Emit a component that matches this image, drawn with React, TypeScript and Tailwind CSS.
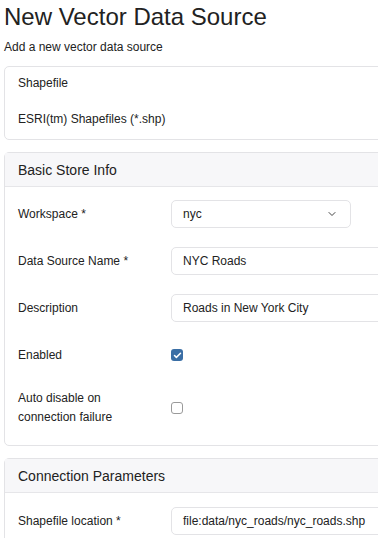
import { ChevronDown, Check } from "lucide-react";

const font = { fontFamily: '"Liberation Sans", Arial, sans-serif' };

const Card = ({ title, children }: { title?: string; children: React.ReactNode }) => (
  <div className="rounded-[5px] border border-[#e3e3e6] bg-white">
    {title && (
      <div className="flex h-[34px] items-center border-b border-[#e6e6e9] bg-[#f7f7f9] px-[13px] pt-[2px] text-[14px] text-[#222]">
        {title}
      </div>
    )}
    {children}
  </div>
);

const Row = ({ label, children, tall }: { label: React.ReactNode; children?: React.ReactNode; tall?: boolean }) => (
  <div className={`flex items-center ${tall ? "h-[40px]" : "h-[28px]"}`}>
    <div className={`pl-[13px] text-[12px] leading-[19px] text-[#222] ${children ? "w-[166px] shrink-0" : "whitespace-nowrap"}`}>
      {label}
    </div>
    {children}
  </div>
);

const TextBox = ({ value }: { value: string }) => (
  <div className="flex h-[28px] w-[240px] items-center rounded-[5px] border border-[#e3e3e6] px-[11px] text-[12px] text-[#222]">
    {value}
  </div>
);

const Box = ({ checked }: { checked?: boolean }) =>
  checked ? (
    <div className="flex h-[12px] w-[12px] items-center justify-center rounded-[3px] bg-[#3a6ea5]">
      <Check size={9} strokeWidth={4} color="white" />
    </div>
  ) : (
    <div className="h-[12px] w-[12px] rounded-[3px] border border-[#9a9a9a] bg-white" />
  );

export default function App() {
  return (
    <div className="h-[538px] w-[378px] overflow-hidden bg-white" style={font}>
      <div className="w-[430px] pl-[4px]">
        <h1 className="pt-[2px] text-[24px] leading-[30px] text-[#222]">New Vector Data Source</h1>
        <p className="mt-[6px] text-[12px] leading-[18px] text-[#222]">Add a new vector data source</p>

        <div className="mt-[10px] flex flex-col gap-[12px]">
          <Card>
            <div className="flex flex-col gap-[8px] pt-[2px] pb-[6px]">
              <Row label="Shapefile" />
              <Row label="ESRI(tm) Shapefiles (*.shp)" />
            </div>
          </Card>

          <Card title="Basic Store Info">
            <div className="flex flex-col gap-[19px] pt-[13px] pb-[17px]">
              <Row label="Workspace *">
                <div className="flex h-[28px] w-[180px] items-center justify-between rounded-[5px] border border-[#e3e3e6] pl-[11px] pr-[12px] text-[12px] text-[#222]">
                  nyc
                  <ChevronDown size={12} strokeWidth={2} color="#444" />
                </div>
              </Row>
              <Row label="Data Source Name *">
                <TextBox value="NYC Roads" />
              </Row>
              <Row label="Description">
                <TextBox value="Roads in New York City" />
              </Row>
              <Row label="Enabled">
                <Box checked />
              </Row>
              <Row tall label={<>Auto disable on<br />connection failure</>}>
                <Box />
              </Row>
            </div>
          </Card>

          <Card title="Connection Parameters">
            <div className="flex flex-col gap-[19px] pt-[14px] pb-[17px]">
              <Row label="Shapefile location *">
                <TextBox value="file:data/nyc_roads/nyc_roads.shp" />
              </Row>
            </div>
          </Card>
        </div>
      </div>
    </div>
  );
}
